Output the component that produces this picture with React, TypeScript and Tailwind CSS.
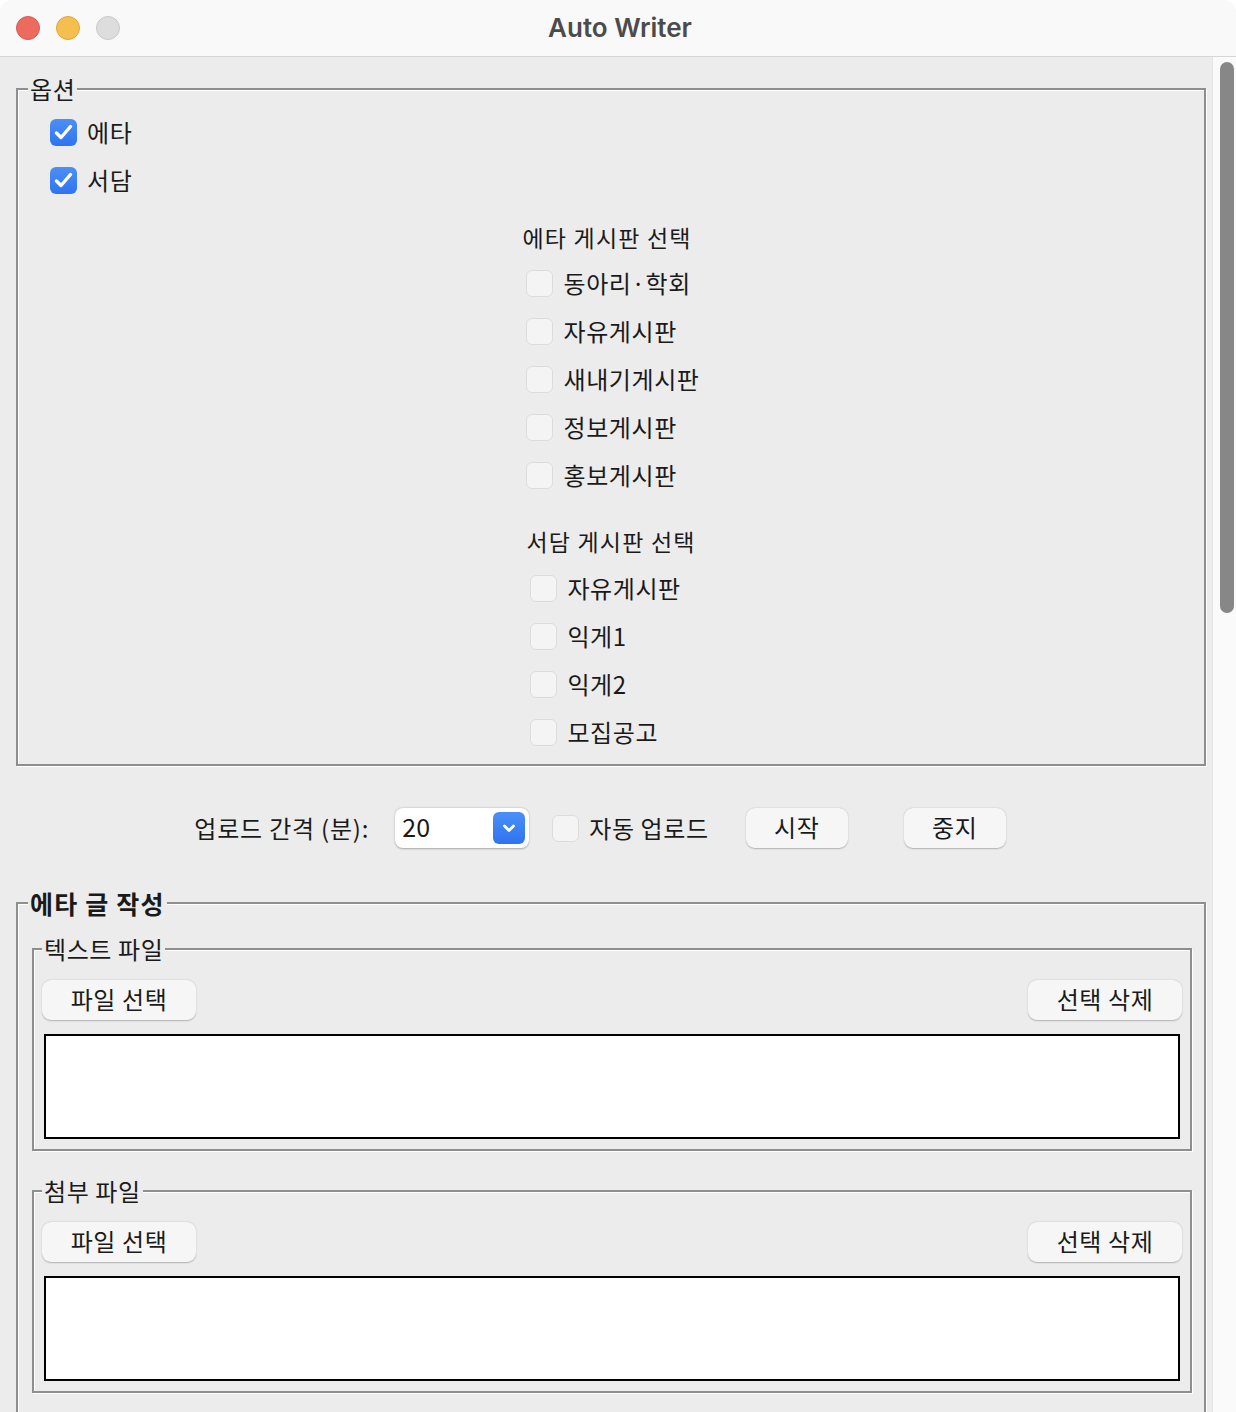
import React from 'react';

const FONT = '"Noto Sans CJK KR", "Noto Sans", "Liberation Sans", sans-serif';

interface GroupProps {
  label: string;
  labelClass: string;
  className: string;
  children: React.ReactNode;
}

// Tk 스타일 groove 프레임
const Group: React.FC<GroupProps> = ({ label, labelClass, className, children }) => (
  <div className={`relative border-2 border-[#8e8e8e] shadow-[inset_1px_1px_0_#ffffff,1px_1px_0_#ffffff] ${className}`}>
    <span className={`absolute top-[-1px] -translate-y-1/2 bg-[#ececec] px-[2px] leading-none text-[#1a1a1a] ${labelClass}`}>
      {label}
    </span>
    {children}
  </div>
);

const Check: React.FC<{ checked?: boolean }> = ({ checked }) =>
  checked ? (
    <span className="flex w-[27px] h-[27px] items-center justify-center rounded-[6px] bg-gradient-to-b from-[#4b90f8] to-[#2f73ef]">
      <svg width="27" height="27" viewBox="0 0 27 27" fill="none">
        <path d="M6.5 14 L11 18.5 L20.5 7.5" stroke="#ffffff" strokeWidth="3.4" strokeLinecap="round" strokeLinejoin="round" />
      </svg>
    </span>
  ) : (
    <span className="block w-[27px] h-[27px] rounded-[6px] bg-[#f4f4f4] border border-[#dcdcdc]" />
  );

const CheckRow: React.FC<{ label: string; checked?: boolean }> = ({ label, checked }) => (
  <div className="flex h-[48px] items-center gap-[10px]">
    <Check checked={checked} />
    <span className="text-[24px] tracking-[0.6px] text-[#1a1a1a] leading-none">{label}</span>
  </div>
);

const Btn: React.FC<{ label: string; className?: string }> = ({ label, className = '' }) => (
  <button className={`h-[40px] rounded-[9px] bg-[#f6f6f6] pb-[3px] text-[24px] tracking-[0.6px] text-[#1a1a1a] leading-none shadow-[0_0.5px_1.5px_rgba(0,0,0,0.25)] ${className}`}>
    {label}
  </button>
);

const FileGroup: React.FC<{ label: string; className: string }> = ({ label, className }) => (
  <Group label={label} labelClass="left-[8px] text-[24px] tracking-[0.6px]" className={`px-[8px] pt-[30px] pb-[10px] ${className}`}>
    <div className="flex justify-between">
      <Btn label="파일 선택" className="w-[154px]" />
      <Btn label="선택 삭제" className="w-[154px]" />
    </div>
    <div className="mx-[2px] mt-[14px] h-[105px] border-2 border-black bg-white" />
  </Group>
);

const ETA_BOARDS = ['동아리·학회', '자유게시판', '새내기게시판', '정보게시판', '홍보게시판'];
const SEODAM_BOARDS = ['자유게시판', '익게1', '익게2', '모집공고'];

export default function App() {
  return (
    <div className="w-[1236px] h-[1412px] overflow-hidden bg-white" style={{ fontFamily: FONT }}>
      <div className="flex h-full flex-col overflow-hidden rounded-t-[12px]">
        {/* 타이틀 바 */}
        <div className="relative flex h-[57px] shrink-0 items-center gap-[16px] border-b border-[#d6d6d6] bg-[#f9f9f9] pl-[16px]">
          <span className="h-[24px] w-[24px] rounded-full bg-[#ed6a5e] border border-[#d85a4f]" />
          <span className="h-[24px] w-[24px] rounded-full bg-[#f5bf4f] border border-[#dea63e]" />
          <span className="h-[24px] w-[24px] rounded-full bg-[#dddddd] border border-[#c9c9c9]" />
          <div
            className="absolute inset-0 flex items-center justify-center pb-[2px] pl-[4px] text-[26px] font-semibold text-[#4b4b4b]"
            style={{ fontFamily: 'Inter, "Liberation Sans", sans-serif' }}
          >
            Auto Writer
          </div>
        </div>

        <div className="flex min-h-0 flex-1">
          <main className="w-[1212px] shrink-0 bg-[#ececec]">
            {/* 옵션 */}
            <Group label="옵션" labelClass="left-[10px] text-[24px] tracking-[0.6px]" className="ml-[16px] mr-[6px] mt-[31px] pl-[32px] pt-[18px] pb-[8px]">
              <CheckRow label="에타" checked />
              <CheckRow label="서담" checked />

              <div className="flex flex-col items-center pr-[32px]">
                <div className="mt-[18px] flex flex-col">
                  <div className="flex h-[30px] items-center text-[23px] tracking-[1.2px] text-[#1a1a1a]">에타 게시판 선택</div>
                  <div className="mt-[7px] pl-[4px]">
                    {ETA_BOARDS.map(b => (
                      <CheckRow key={b} label={b} />
                    ))}
                  </div>
                </div>
                <div className="mt-[27px] flex flex-col">
                  <div className="flex h-[30px] items-center text-[23px] tracking-[1.2px] text-[#1a1a1a]">서담 게시판 선택</div>
                  <div className="mt-[8px] pl-[4px]">
                    {SEODAM_BOARDS.map(b => (
                      <CheckRow key={b} label={b} />
                    ))}
                  </div>
                </div>
              </div>
            </Group>

            {/* 업로드 설정 */}
            <div className="mt-[38px] flex h-[48px] items-center justify-center pr-[12px]">
              <span className="text-[24px] tracking-[0.8px] leading-none text-[#1a1a1a]">업로드 간격 (분):</span>
              <div className="ml-[26px] flex h-[40px] w-[134px] items-center justify-between rounded-[8px] bg-white pl-[7px] pr-[4px] shadow-[0_0.5px_2px_rgba(0,0,0,0.3)]">
                <span className="pb-[3px] text-[25px] leading-none text-[#1a1a1a]">20</span>
                <span className="flex h-[32px] w-[32px] items-center justify-center rounded-[6px] bg-gradient-to-b from-[#4b90f8] to-[#2f73ef]">
                  <svg width="20" height="20" viewBox="0 0 20 20" fill="none">
                    <path d="M5.5 8 L10 12.5 L14.5 8" stroke="#ffffff" strokeWidth="2.8" strokeLinecap="round" strokeLinejoin="round" />
                  </svg>
                </span>
              </div>
              <div className="ml-[23px] flex items-center gap-[10px]">
                <Check />
                <span className="text-[24px] tracking-[0.6px] leading-none text-[#1a1a1a]">자동 업로드</span>
              </div>
              <Btn label="시작" className="ml-[37px] w-[102px]" />
              <Btn label="중지" className="ml-[56px] w-[102px]" />
            </div>

            {/* 에타 글 작성 */}
            <Group label="에타 글 작성" labelClass="left-[10px] text-[25px] font-bold tracking-[1.2px]" className="ml-[16px] mr-[6px] mt-[50px] pl-[14px] pr-[12px] pt-[44px] pb-[40px]">
              <FileGroup label="텍스트 파일" className="" />
              <FileGroup label="첨부 파일" className="mt-[39px]" />
            </Group>
          </main>

          {/* 스크롤바 */}
          <div className="flex-1 border-l border-[#e6e6e6] bg-[#fafafa]">
            <div className="ml-[7px] mt-[5px] h-[551px] w-[14px] rounded-full bg-[#878787]" />
          </div>
        </div>
      </div>
    </div>
  );
}
